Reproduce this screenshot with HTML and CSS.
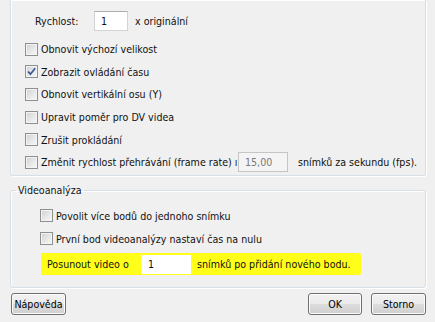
FILE: index.html
```html
<!DOCTYPE html>
<html lang="cs">
<head>
    <meta charset="UTF-8">
    <title>Nastavení videa</title>
    <link rel="stylesheet" href="styles.css">
</head>
<body>
    <div class="dialog">
        <div class="group group-video">
            <div class="speed-row">
                <span class="speed-label">Rychlost:</span>
                <span class="field speed-field">1</span>
                <span class="speed-unit">x originální</span>
            </div>

            <div class="checks">
                <div class="check-row"><span class="box"></span>Obnovit výchozí velikost</div>
                <div class="check-row"><span class="box"><svg viewBox="0 0 11 11" width="11" height="11"><path d="M2 5.5 L4.4 8.2 L9.2 2.2" fill="none" stroke="#3b5a8f" stroke-width="1.8"/></svg></span>Zobrazit ovládání času</div>
                <div class="check-row"><span class="box"></span>Obnovit vertikální osu (Y)</div>
                <div class="check-row"><span class="box"></span>Upravit poměr pro DV videa</div>
                <div class="check-row"><span class="box"></span>Zrušit prokládání</div>
                <div class="check-row">
                    <span class="box"></span>
                    <span class="rate-label">Změnit rychlost přehrávání (frame rate) ı</span>
                    <span class="field field-disabled rate-field">15,00</span>
                    <span>snímků za sekundu (fps).</span>
                </div>
            </div>
        </div>

        <fieldset class="group group-analysis">
            <legend>Videoanalýza</legend>
            <div class="analysis-rows">
                <div class="check-row"><span class="box"></span>Povolit více bodů do jednoho snímku</div>
                <div class="check-row"><span class="box"></span>První bod videoanalýzy nastaví čas na nulu</div>
                <div class="step-row">
                    <span class="step-label">Posunout video o</span>
                    <span class="field step-field">1</span>
                    <span>snímků po přidání nového bodu.</span>
                </div>
            </div>
        </fieldset>

        <div class="buttons">
            <button class="btn btn-help">Nápověda</button>
            <span class="spacer"></span>
            <button class="btn btn-ok">OK</button>
            <button class="btn btn-cancel">Storno</button>
        </div>
    </div>
</body>
</html>
```

FILE: styles.css
```css
:root {
    --bg-color: #f0f0f0;
    --group-border: #d5dfe5;
    --field-border: #abadb3;
    --highlight: #ffff1a;
}

body {
    margin: 0;
    background-color: var(--bg-color);
    font-family: "DejaVu Sans Condensed", Tahoma, sans-serif;
    font-size: 10.6px;
    color: #111;
}

.dialog {
    width: 435px;
    height: 322px;
    box-sizing: border-box;
    padding: 0 9px 0 10px;
    display: flex;
    flex-direction: column;
}

.group {
    border: 1px solid var(--group-border);
    border-radius: 3px;
    box-shadow: 1px 1px 0 #fff, inset 1px 1px 0 #fff;
}

.group-video {
    height: 176px;
    box-sizing: border-box;
    border-top: none;
    border-radius: 0 0 3px 3px;
}

.speed-row {
    display: flex;
    align-items: center;
    margin-top: 11px;
    padding-left: 24px;
}

.speed-label {
    width: 59px;
}

.field {
    display: flex;
    align-items: center;
    box-sizing: border-box;
    height: 20px;
    padding-left: 6px;
    background-color: #fff;
    border: 1px solid #d0d3d8;
    border-top-color: var(--field-border);
}

.speed-field {
    width: 34px;
}

.speed-unit {
    margin-left: 7px;
}

.checks {
    margin-top: 7px;
    padding-left: 14px;
}

.check-row {
    display: flex;
    align-items: center;
    height: 22.6px;
    white-space: nowrap;
}

.box {
    width: 13px;
    height: 13px;
    box-sizing: border-box;
    margin-right: 3px;
    flex-shrink: 0;
    border: 1px solid #8e8f8f;
    background: linear-gradient(135deg, #cdd0d4 0%, #e9eaeb 60%, #f6f6f6 100%);
    box-shadow: inset 0 0 0 1px #f4f4f4;
    display: flex;
    align-items: center;
    justify-content: center;
}

.rate-label {
    width: 197px;
    flex-shrink: 0;
}

.field-disabled {
    background-color: #f4f4f4;
    border-color: #c5c5c5;
    color: #7a7a7a;
}

.rate-field {
    width: 50px;
    margin-right: 10px;
}

.group-analysis {
    margin: 8px 0 0 0;
    padding: 0 0 0 5px;
    min-width: 0;
    height: 104px;
    box-sizing: border-box;
}

.group-analysis legend {
    padding: 0 2px;
}

.analysis-rows {
    padding: 8px 0 0 24px;
}

.analysis-rows .check-row {
    height: 23px;
}

.step-row {
    display: flex;
    align-items: center;
    margin: 3px 0 0 1px;
    width: 320px;
    height: 22px;
    background-color: var(--highlight);
    border-radius: 2px;
    white-space: nowrap;
}

.step-label {
    width: 94px;
    padding-left: 6px;
}

.step-field {
    width: 50px;
    height: 19px;
    margin-right: 6px;
    border-color: #fff;
}

.buttons {
    display: flex;
    align-items: center;
    margin-top: 5px;
    padding-left: 1px;
    gap: 9px;
}

.spacer {
    flex: 1;
}

.btn {
    height: 22px;
    padding: 0;
    font-family: inherit;
    font-size: 10.6px;
    color: #000;
    border: 1px solid #707070;
    border-radius: 3px;
    background: linear-gradient(#f2f2f2 0%, #ebebeb 48%, #dddddd 52%, #cfcfcf 100%);
    box-shadow: inset 0 0 0 1px #fbfbfb;
}

.btn-help {
    width: 55px;
}

.btn-ok {
    width: 54px;
}

.btn-cancel {
    width: 55px;
}
```
